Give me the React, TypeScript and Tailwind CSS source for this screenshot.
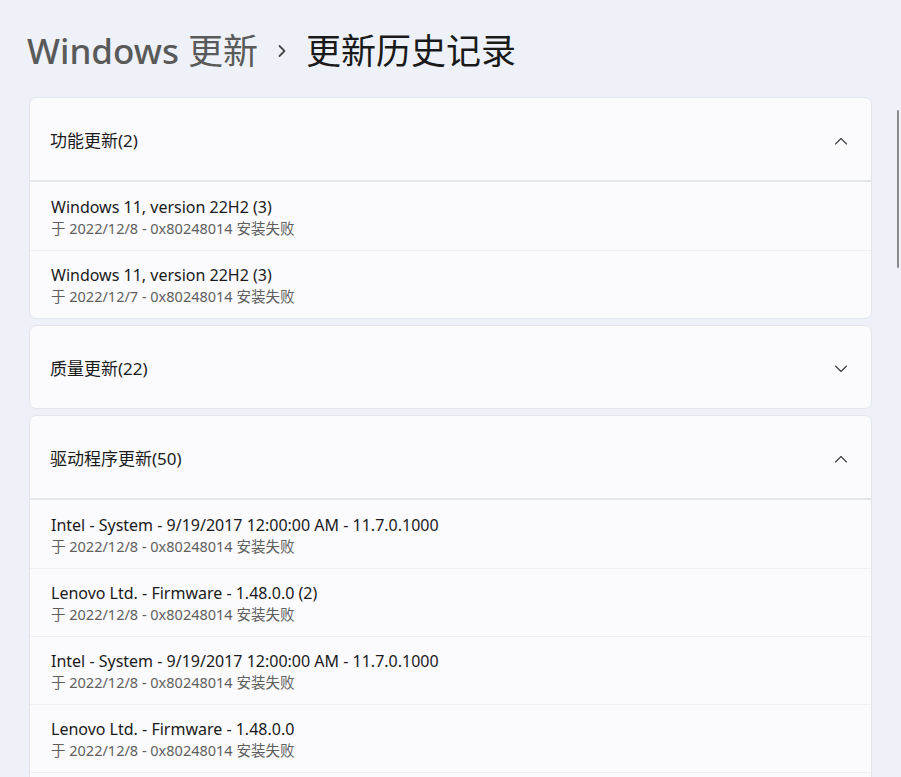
import type { ReactNode } from "react";

type Item = { title: string; sub: string };

const feature: Item[] = [
  { title: "Windows 11, version 22H2 (3)", sub: "于 2022/12/8 - 0x80248014 安装失败" },
  { title: "Windows 11, version 22H2 (3)", sub: "于 2022/12/7 - 0x80248014 安装失败" },
];

const drivers: Item[] = [
  { title: "Intel - System - 9/19/2017 12:00:00 AM - 11.7.0.1000", sub: "于 2022/12/8 - 0x80248014 安装失败" },
  { title: "Lenovo Ltd. - Firmware - 1.48.0.0 (2)", sub: "于 2022/12/8 - 0x80248014 安装失败" },
  { title: "Intel - System - 9/19/2017 12:00:00 AM - 11.7.0.1000", sub: "于 2022/12/8 - 0x80248014 安装失败" },
  { title: "Lenovo Ltd. - Firmware - 1.48.0.0", sub: "于 2022/12/8 - 0x80248014 安装失败" },
  { title: "Intel - System - 9/19/2017 12:00:00 AM - 11.7.0.1000", sub: "于 2022/12/8 - 0x80248014 安装失败" },
];

function Chevron({ up }: { up: boolean }) {
  return (
    <svg width="14" height="8" viewBox="0 0 14 8" fill="none" className="text-[#3b3b3b]">
      <path
        d={up ? "M1.5 7 L7 1.5 L12.5 7" : "M1.5 1 L7 6.5 L12.5 1"}
        stroke="currentColor"
        strokeWidth="1.1"
        strokeLinecap="round"
        strokeLinejoin="round"
      />
    </svg>
  );
}

function Section({ title, open, items }: { title: string; open: boolean; items?: Item[] }) {
  return (
    <div className="shrink-0 overflow-hidden rounded-[7px] border border-[#e2e5ea] bg-[#fbfbfd]">
      <div className="flex h-[82px] items-center justify-between pl-[20px] pr-[23px] pt-[3px]">
        <span className="text-[17px] text-[#1b1b1b]">{title}</span>
        <Chevron up={open} />
      </div>
      {open && items && (
        <div className="border-t-2 border-[#e3e6eb]">
          {items.map((it, i) => (
            <Row key={i} first={i === 0}>
              <div className="text-[16px] leading-[21px] text-[#1a1a1a]">{it.title}</div>
              <div className="text-[14.5px] leading-[20px] text-[#5f5f5f]">{it.sub}</div>
            </Row>
          ))}
        </div>
      )}
    </div>
  );
}

function Row({ first, children }: { first: boolean; children: ReactNode }) {
  return (
    <div
      className={`flex h-[68px] flex-col justify-center pl-[21px] pt-[2px] ${
        first ? "" : "border-t border-[#eef0f4]"
      }`}
    >
      {children}
    </div>
  );
}

export default function App() {
  return (
    <div
      className="relative flex h-[777px] w-[901px] flex-col overflow-hidden bg-[#eef2f8]"
      style={{ fontFamily: '"Noto Sans", "Noto Sans CJK SC", sans-serif' }}
    >
      {/* 标题 */}
      <div className="flex h-[97px] shrink-0 items-center gap-[14px] pl-[27px] pt-[4px] text-[35px] leading-none">
        <span className="text-[#5a5a5a]">
          <span className="font-medium">Windows</span> 更新
        </span>
        <svg width="10" height="14" viewBox="0 0 10 14" fill="none" className="mx-[5px] text-[#4a4a4a]">
          <path d="M2.5 2 L7.5 7 L2.5 12" stroke="currentColor" strokeWidth="1.8" strokeLinecap="round" strokeLinejoin="round" />
        </svg>
        <span className="text-[#1a1a1a]">更新历史记录</span>
      </div>

      {/* 列表 */}
      <div className="flex flex-col gap-[6px] px-[29px]">
        <Section title="功能更新(2)" open items={feature} />
        <Section title="质量更新(22)" open={false} />
        <Section title="驱动程序更新(50)" open items={drivers} />
      </div>

      {/* 滚动条 */}
      <div className="absolute right-[2px] top-[110px] h-[158px] w-[2px] rounded-full bg-[#8b8b8b]" />
    </div>
  );
}
